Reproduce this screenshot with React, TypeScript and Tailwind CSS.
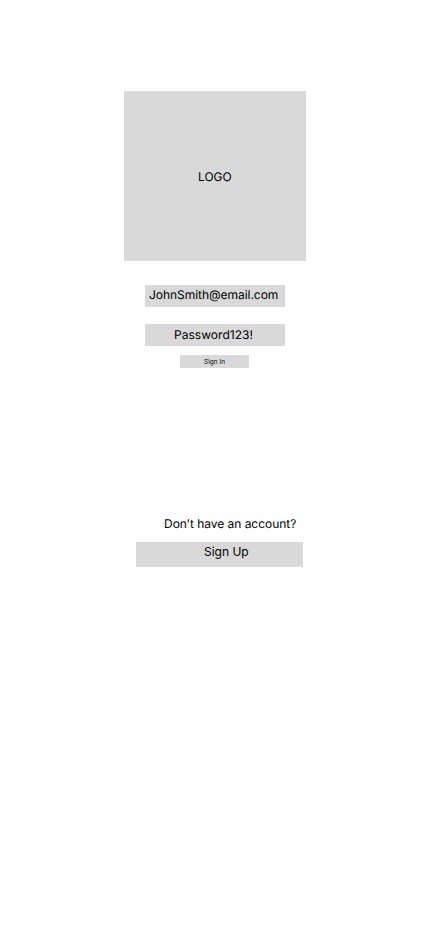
export default function App() {
  return (
    <main className="flex h-[932px] w-[430px] flex-col items-start bg-white pt-[91px] font-['Inter',sans-serif] text-[12px] leading-[15px] font-normal text-black antialiased [text-rendering:geometricPrecision]">
      <div className="ml-[124px] h-[170px] w-[182px] bg-[#d9d9d9] pt-[78px] pl-[74px]">LOGO</div>
      <div className="mt-[24px] ml-[145px] h-[22px] w-[140px] bg-[#d9d9d9] pt-[2px] pl-[4px] tracking-[-0.04px] whitespace-nowrap">JohnSmith@email.com</div>
      <div className="mt-[17px] ml-[145px] h-[22px] w-[140px] bg-[#d9d9d9] pt-[3px] pl-[29px] tracking-[0.03px] whitespace-nowrap">Password123!</div>
      <button className="mt-[9px] ml-[180px] block h-[13px] w-[69px] bg-[#d9d9d9] pt-px pl-[24px] text-left text-[6.5px] leading-[13px]">Sign In</button>
      <p className="mt-[148px] ml-[164px] tracking-[-0.03px] whitespace-nowrap">Don’t have an account?</p>
      <button className="mt-[11px] ml-[136px] flex h-[25px] w-[167px] items-start bg-[#d9d9d9] pt-[2px] pl-[68px]">Sign Up</button>
    </main>
  );
}
